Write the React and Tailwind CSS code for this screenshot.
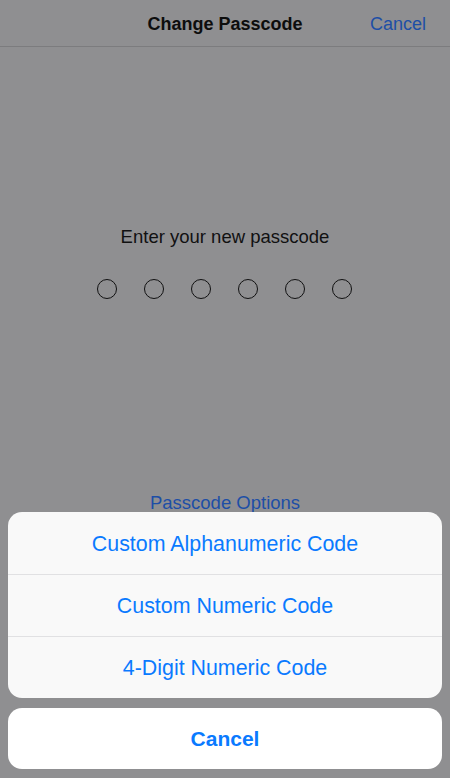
import React from "react";

export default function App() {
  const options = ["Custom Alphanumeric Code", "Custom Numeric Code", "4-Digit Numeric Code"];

  return (
    <div
      className="relative w-[450px] h-[778px] overflow-hidden bg-[#8f8f91]"
      style={{ fontFamily: '"Liberation Sans", Arial, sans-serif' }}
    >
      {/* Nav bar */}
      <div className="relative h-[47px] border-b border-[#7c7c7e] flex items-center justify-center pt-[2px]">
        <span className="text-[18px] font-bold text-[#0d0d0d]">Change Passcode</span>
        <span className="absolute right-[24px] top-[11px] text-[18px] text-[#1d4ea6]">Cancel</span>
      </div>

      {/* Passcode entry */}
      <div className="flex flex-col items-center pt-[178px]">
        <p className="text-[18.5px] leading-[24px] text-[#111]">Enter your new passcode</p>
        <div className="flex gap-[27px] mt-[30px] -ml-[2px]">
          {[0, 1, 2, 3, 4, 5].map((i) => (
            <div key={i} className="w-[20px] h-[20px] rounded-full border-[1.5px] border-[#111]" />
          ))}
        </div>
        <p className="mt-[192px] text-[18.5px] leading-[24px] text-[#1d4ea6]">Passcode Options</p>
      </div>

      {/* Action sheet */}
      <div className="absolute left-[8px] right-[8px] bottom-[9px] flex flex-col gap-[10px]">
        <div className="rounded-[14px] bg-[#f9f9f9] overflow-hidden">
          {options.map((o, i) => (
            <div
              key={o}
              className={`h-[62px] flex items-center justify-center pt-[2px] text-[21.4px] text-[#0a7aff] ${
                i > 0 ? "border-t border-[#e1e1e3]" : ""
              }`}
            >
              {o}
            </div>
          ))}
        </div>
        <div className="h-[61px] rounded-[14px] bg-white flex items-center justify-center text-[21px] font-bold text-[#0a7aff]">
          Cancel
        </div>
      </div>
    </div>
  );
}
